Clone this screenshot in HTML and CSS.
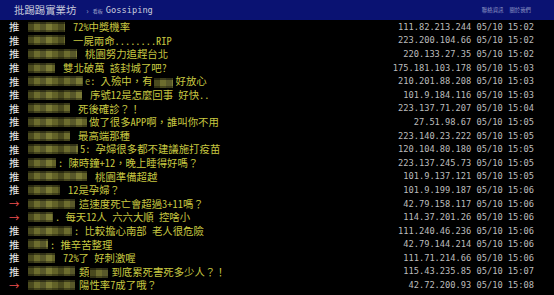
FILE: index.html
```html
<!DOCTYPE html>
<html lang="zh-Hant">
<head>
    <meta charset="UTF-8">
    <meta name="viewport" content="width=device-width, initial-scale=1.0">
    <title>Gossiping - 批踢踢實業坊</title>
    <link rel="stylesheet" href="styles.css">
</head>
<body>
    <div class="topbar">
        <span class="logo">批踢踢實業坊</span>
        <span class="caret">›</span>
        <span class="board-label">看板</span>
        <span class="board">Gossiping</span>
        <span class="links">聯絡資訊<span class="sep"></span>關於我們</span>
    </div>

    <div class="pushes">
        <div class="push"><span class="tag">推</span><span class="uid" style="width:37px"></span><span class="content">72%中獎機率</span><span class="ip">111.82.213.244 05/10 15:02</span></div>
        <div class="push"><span class="tag">推</span><span class="uid" style="width:37px"></span><span class="content">一屍兩命........RIP</span><span class="ip">223.200.104.66 05/10 15:02</span></div>
        <div class="push"><span class="tag">推</span><span class="uid" style="width:49px"></span><span class="content">桃園努力追趕台北</span><span class="ip">220.133.27.35 05/10 15:02</span></div>
        <div class="push"><span class="tag">推</span><span class="uid" style="width:27px"></span><span class="content">雙北破萬 該封城了吧?</span><span class="ip">175.181.103.178 05/10 15:03</span></div>
        <div class="push"><span class="tag">推</span><span class="uid tight" style="width:55px"></span><span class="content"><span class="dim">e</span>: 入殮中，有<span class="uid inner" style="width:19px"></span>好放心</span><span class="ip">210.201.88.208 05/10 15:03</span></div>
        <div class="push"><span class="tag">推</span><span class="uid" style="width:54px"></span><span class="content">序號12是怎麼回事 好快..</span><span class="ip">101.9.184.116 05/10 15:03</span></div>
        <div class="push"><span class="tag">推</span><span class="uid" style="width:42px"></span><span class="content">死後確診？！</span><span class="ip">223.137.71.207 05/10 15:04</span></div>
        <div class="push"><span class="tag">推</span><span class="uid tight" style="width:59px"></span><span class="content">做了很多APP啊，誰叫你不用</span><span class="ip">27.51.98.67 05/10 15:05</span></div>
        <div class="push"><span class="tag">推</span><span class="uid" style="width:42px"></span><span class="content">最高端那種</span><span class="ip">223.140.23.222 05/10 15:05</span></div>
        <div class="push"><span class="tag">推</span><span class="uid tight" style="width:50px"></span><span class="content">5: 孕婦很多都不建議施打疫苗</span><span class="ip">120.104.80.180 05/10 15:05</span></div>
        <div class="push"><span class="tag">推</span><span class="uid tight" style="width:28px"></span><span class="content">: 陳時鐘+12，晚上睡得好嗎？</span><span class="ip">223.137.245.73 05/10 15:05</span></div>
        <div class="push"><span class="tag">推</span><span class="uid" style="width:59px"></span><span class="content">桃園準備超越</span><span class="ip">101.9.137.121 05/10 15:05</span></div>
        <div class="push"><span class="tag">推</span><span class="uid" style="width:32px"></span><span class="content">12是孕婦？</span><span class="ip">101.9.199.187 05/10 15:06</span></div>
        <div class="push"><span class="tag arrow">→</span><span class="uid mid" style="width:47px"></span><span class="content">這速度死亡會超過3+11嗎？</span><span class="ip">42.79.158.117 05/10 15:06</span></div>
        <div class="push"><span class="tag arrow">→</span><span class="uid tight" style="width:25px"></span><span class="content">. 每天12人 六六大順 控啥小</span><span class="ip">114.37.201.26 05/10 15:06</span></div>
        <div class="push"><span class="tag">推</span><span class="uid tight" style="width:44px"></span><span class="content">: 比較擔心南部 老人很危險</span><span class="ip">111.240.46.236 05/10 15:06</span></div>
        <div class="push"><span class="tag">推</span><span class="uid tight" style="width:20px"></span><span class="content">: 推辛苦整理</span><span class="ip">42.79.144.214 05/10 15:06</span></div>
        <div class="push"><span class="tag">推</span><span class="uid" style="width:27px"></span><span class="content">72%了 好刺激喔</span><span class="ip">111.71.214.66 05/10 15:06</span></div>
        <div class="push"><span class="tag">推</span><span class="uid mid" style="width:47px"></span><span class="content">類<span class="uid inner" style="width:18px"></span>到底累死害死多少人？！</span><span class="ip">115.43.235.85 05/10 15:07</span></div>
        <div class="push"><span class="tag arrow">→</span><span class="uid mid" style="width:47px"></span><span class="content">陽性率7成了哦？</span><span class="ip">42.72.200.93 05/10 15:08</span></div>
    </div>
</body>
</html>
```

FILE: styles.css
```css
body {
    margin: 0;
    background-color: #000;
    font-family: "Noto Sans CJK TC", sans-serif;
    overflow: hidden;
}

.topbar {
    display: flex;
    align-items: center;
    height: 20px;
    padding: 0 23px 0 14px;
    background-color: #0a1272;
    color: #c8cbdc;
}

.logo {
    font-size: 10.4px;
    line-height: 20px;
}

.caret {
    margin-left: 10px;
    font-size: 8px;
    color: #9aa0c8;
}

.board-label {
    margin-left: 4px;
    font-size: 5px;
    color: #9aa0c8;
}

.board {
    margin-left: 3px;
    font-family: "DejaVu Sans Mono", monospace;
    font-size: 8.7px;
}

.links {
    margin-left: auto;
    font-size: 5.4px;
    color: #8d94c4;
}

.sep {
    display: inline-block;
    width: 6px;
}

.push {
    display: flex;
    align-items: center;
    height: 13.6px;
    padding: 0 20px 0 9px;
    white-space: pre;
}

.tag {
    width: 19px;
    font-size: 10.4px;
    color: #e8e8e8;
}

.tag.arrow {
    color: #f05050;
}

.uid {
    display: inline-block;
    height: 10px;
    margin-right: 8px;
    background:
        linear-gradient(180deg, rgba(0, 0, 0, 0.45) 0 2px, transparent 2px 8px, rgba(0, 0, 0, 0.35) 8px),
        repeating-linear-gradient(90deg, #4a4a1e 0 6px, #6c6c2e 6px 12px, #58582a 12px 18px, #7a7a36 18px 24px, #626228 24px 30px);
}

.uid.tight {
    margin-right: 2px;
}

.uid.mid {
    margin-right: 4px;
}

.uid.inner {
    vertical-align: middle;
    margin: 0 3px 0 1px;
}

.content {
    font-family: "Noto Sans Mono CJK TC", "DejaVu Sans Mono", "Noto Sans CJK TC", monospace;
    font-size: 10.4px;
    line-height: 13.6px;
    color: #c8c840;
}

.dim {
    color: #8a8a30;
}

.ip {
    margin-left: auto;
    font-family: "DejaVu Sans Mono", monospace;
    font-size: 8.7px;
    color: #bcbcbc;
}
```
